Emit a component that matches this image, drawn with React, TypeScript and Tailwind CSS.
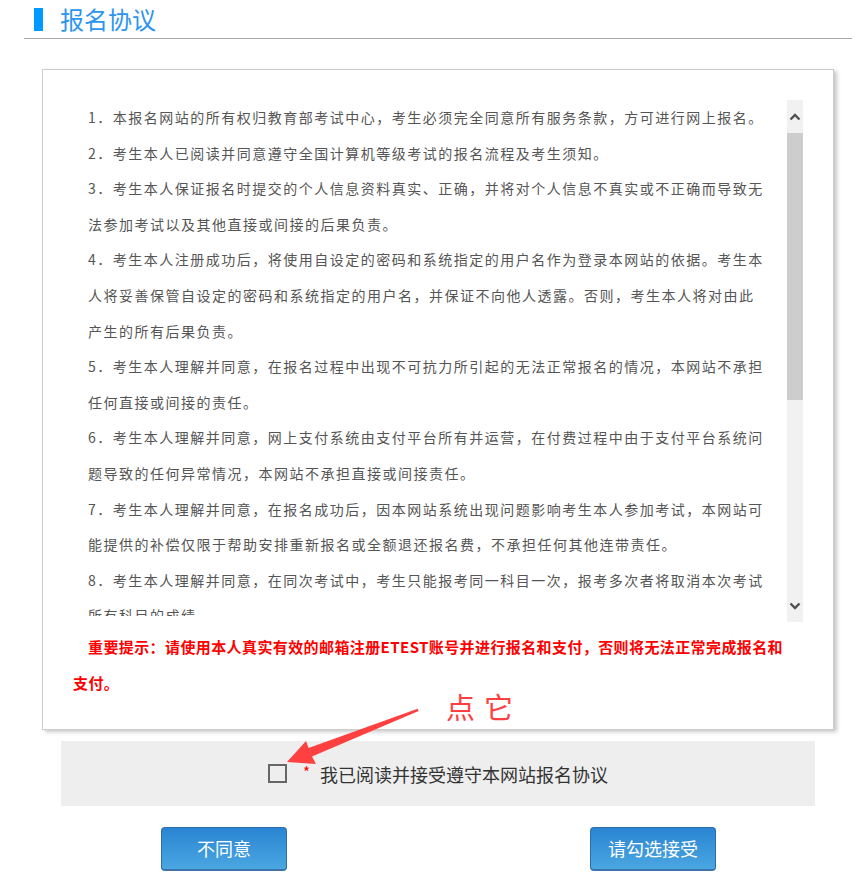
import React from 'react';

const TERMS: string[] = [
  '1．本报名网站的所有权归教育部考试中心，考生必须完全同意所有服务条款，方可进行网上报名。',
  '2．考生本人已阅读并同意遵守全国计算机等级考试的报名流程及考生须知。',
  '3．考生本人保证报名时提交的个人信息资料真实、正确，并将对个人信息不真实或不正确而导致无法参加考试以及其他直接或间接的后果负责。',
  '4．考生本人注册成功后，将使用自设定的密码和系统指定的用户名作为登录本网站的依据。考生本人将妥善保管自设定的密码和系统指定的用户名，并保证不向他人透露。否则，考生本人将对由此产生的所有后果负责。',
  '5．考生本人理解并同意，在报名过程中出现不可抗力所引起的无法正常报名的情况，本网站不承担任何直接或间接的责任。',
  '6．考生本人理解并同意，网上支付系统由支付平台所有并运营，在付费过程中由于支付平台系统问题导致的任何异常情况，本网站不承担直接或间接责任。',
  '7．考生本人理解并同意，在报名成功后，因本网站系统出现问题影响考生本人参加考试，本网站可能提供的补偿仅限于帮助安排重新报名或全额退还报名费，不承担任何其他连带责任。',
  '8．考生本人理解并同意，在同次考试中，考生只能报考同一科目一次，报考多次者将取消本次考试所有科目的成绩。',
  '9．考生本人理解并同意，报名信息提交并缴费成功后不得修改，考生须认真核对个人报名信息。',
];

function Chevron({ direction }: { direction: 'up' | 'down' }) {
  return (
    <svg width="12" height="8" viewBox="0 0 12 8" fill="none" aria-hidden>
      <path
        d={direction === 'up' ? 'M1.5 6.5 6 2l4.5 4.5' : 'M1.5 1.5 6 6l4.5-4.5'}
        stroke="#505050"
        strokeWidth="2.4"
      />
    </svg>
  );
}

function FakeScrollbar() {
  return (
    <div className="flex h-full w-[16px] shrink-0 flex-col bg-[#f1f1f1]">
      <div className="flex h-[33px] items-center justify-center">
        <Chevron direction="up" />
      </div>
      <div className="h-[267px] bg-[#cdcdcd]" />
      <div className="flex-1" />
      <div className="flex h-[33px] items-center justify-center">
        <Chevron direction="down" />
      </div>
    </div>
  );
}

function AgreeButton({ label }: { label: string }) {
  return (
    <button
      type="button"
      className="h-[44px] w-[126px] rounded-[4px] border border-[#2b6eaa] border-b-2 border-b-[#3a74a8] bg-gradient-to-b from-[#2a84d2] to-[#4aa7e1] text-[18px] text-white"
    >
      {label}
    </button>
  );
}

export default function App() {
  return (
    <div
      className="relative min-h-screen bg-white"
      style={{ fontFamily: '"Noto Sans CJK SC", "Microsoft YaHei", sans-serif' }}
    >
      <div className="ml-[24px] w-[828px]">
        <div className="flex h-[39px] items-center border-b border-[#aaaaaa] pl-[10px]">
          <span className="h-[23px] w-[9px] bg-[#0099ff]" />
          <h1 className="ml-[17px] text-[24px] leading-none text-[#2b95ef]">报名协议</h1>
        </div>

        <div className="mx-[18px] mt-[30px] border border-[#cccccc] bg-white px-[30px] pt-[30px] pb-[28px] shadow-[3px_2px_4px_rgba(0,0,0,0.22)]">
          <div className="flex h-[522px]">
            <div className="h-[516px] flex-1 overflow-hidden pl-[15px]">
              <div className="w-[679px] text-[14px] leading-[35.6px] tracking-[1.5px] text-[#555]">
                {TERMS.map((item) => (
                  <p key={item}>{item}</p>
                ))}
              </div>
            </div>
            <FakeScrollbar />
          </div>
          <p className="mt-[7px] pr-[8px] indent-[15px] text-[15px] font-bold leading-[36px] tracking-[0.4px] text-[#ff0000]">
            重要提示：请使用本人真实有效的邮箱注册ETEST账号并进行报名和支付，否则将无法正常完成报名和支付。
          </p>
        </div>

        <div className="mx-[37px] mt-[11px] flex h-[65px] items-center justify-center bg-[#eeeeee]">
          <span className="h-[19px] w-[19px] border-2 border-[#666]" />
          <span className="ml-[16px] -translate-y-[2px] text-[15px] leading-none text-[#ff0000]">*</span>
          <span className="ml-[10px] text-[18px] leading-none text-[#333]">我已阅读并接受遵守本网站报名协议</span>
        </div>

        <div className="mt-[21px] flex justify-between pl-[137px] pr-[136px]">
          <AgreeButton label="不同意" />
          <AgreeButton label="请勾选接受" />
        </div>
      </div>

      <span className="absolute left-[446px] top-[692px] text-[29px] leading-none tracking-[9px] text-[#ff4040]">
        点它
      </span>
      <svg
        className="pointer-events-none absolute left-0 top-0"
        width="859"
        height="886"
        viewBox="0 0 859 886"
        aria-hidden
      >
        <polygon
          points="287,762 306,741 308.6,748 417.6,708.8 418.6,711 312,756.5 316,764"
          fill="#ff4040"
        />
      </svg>
    </div>
  );
}
